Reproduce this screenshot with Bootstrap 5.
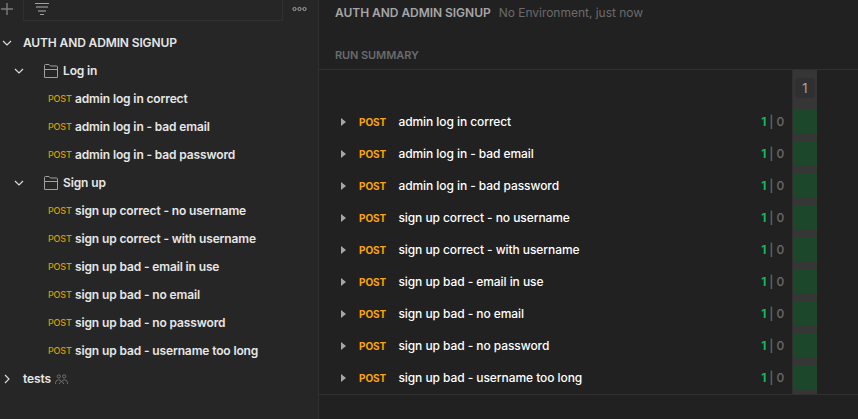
<!DOCTYPE html>
<html lang="en">
<head>
<meta charset="utf-8">
<title>Run summary</title>
<link href="https://cdn.jsdelivr.net/npm/bootstrap@5.3.0/dist/css/bootstrap.min.css" rel="stylesheet">
<style>
body{font-family:Inter,sans-serif;font-size:12px;line-height:16px;background:#212121;color:#fff}
svg{display:block;flex:none}
.side{width:319px;background:#262626;border-right:1px solid #303030;color:#e6e6e6;font-weight:600;letter-spacing:-.13px}
.tools{height:29px}
.plus{width:23px;padding-top:3px}
.filter{width:260px;height:21px;border:1px solid #303030;border-top:0;padding:3px 0 0 11px}
.dots{padding:6px 0 0 9px}
.item{height:28px;white-space:nowrap}
.caret{width:23px;padding-left:2px}
.sub .caret{width:44px;padding-left:14px}
.folder{margin-left:5px}
.req{padding-left:48px}
.req .verb{width:27px;font-size:9px;font-weight:500;color:#d99a08;letter-spacing:-.2px}
.title{height:69px;padding:5px 0 0 16px}
.name{font-weight:600;color:#a6a6a6;letter-spacing:-.04px}
.env{color:#6b6b6b;margin-left:8px;letter-spacing:-.02px}
.label{font-size:11px;font-weight:600;color:#6b6b6b;margin-top:26px;letter-spacing:-.09px}
.grid{height:326px;border-top:1px solid #303030;border-bottom:1px solid #303030}
.results{width:473px;padding-top:36px;font-weight:500;letter-spacing:-.07px}
.line{height:32px;padding-left:22px;white-space:nowrap}
.line .verb{width:39.4px;font-size:10px;font-weight:700;color:#fca510}
.arrow{width:18px}
.score{margin-right:8px;color:#6b6b6b;letter-spacing:-.15px}
.score b{color:#0cbb52;font-weight:700}
.runs{width:25px;background:#363636;border-left:1px solid #303030;padding-top:8px}
.num{width:20px;height:20px;margin:0 2px 12px;border-radius:4px;background:#303030;color:#a6a6a6;font-size:13px;line-height:21px}
.ok{height:24px;margin-bottom:8px;background:#1c472a}
</style>
</head>
<body class="overflow-hidden">
<div class="d-flex vh-100">
<aside class="side flex-shrink-0">
  <div class="tools d-flex">
    <div class="plus"><svg width="14" height="12" viewBox="0 0 14 12"><path d="M1 6h12M7 0v12" stroke="#7c7c7c" stroke-width="1.4" fill="none"/></svg></div>
    <div class="filter"><svg width="14" height="13" viewBox="0 0 14 13"><path d="M0 .5h14M5 11.5h4" stroke="#a0a0a0"/><path d="M1 4h12M3 8h8" stroke="#6c6c6c" stroke-width="2"/></svg></div>
    <div class="dots"><svg width="15" height="6" viewBox="0 0 15 6" fill="none" stroke="#a6a6a6"><circle cx="2.5" cy="3" r="1.6"/><circle cx="7.5" cy="3" r="1.6"/><circle cx="12.5" cy="3" r="1.6"/></svg></div>
  </div>
  <div class="item d-flex align-items-center"><div class="caret"><svg width="10" height="6" viewBox="0 0 10 6"><path d="M1 1l4 4 4-4" fill="none" stroke="#e0e0e0" stroke-width="1.1"/></svg></div><span>AUTH AND ADMIN SIGNUP</span></div>
  <div id="tree"></div>
  <div class="item d-flex align-items-center"><div class="caret"><svg width="10" height="10" viewBox="0 0 10 10"><path d="M3 1l4 4-4 4" fill="none" stroke="#e0e0e0" stroke-width="1.1"/></svg></div><span>tests</span>
  <svg class="ms-1" width="13" height="11" viewBox="0 0 13 11" fill="none" stroke="#777" stroke-width=".9"><circle cx="3.8" cy="2.4" r="1.6"/><circle cx="9.2" cy="2.4" r="1.6"/><path d="M.6 10V8.4Q.8 6 3.6 5.8Q5.6 5.8 6.5 7.6Q7.4 5.8 9.4 5.8Q12.2 6 12.4 8.4V10M4.2 10Q4.4 8.4 6.5 7.4Q8.6 8.4 8.8 10"/></svg></div>
</aside>
<main class="flex-grow-1">
  <div class="title">
    <div class="d-flex"><span class="name">AUTH AND ADMIN SIGNUP</span><span class="env">No Environment, just now</span></div>
    <div class="label">RUN SUMMARY</div>
  </div>
  <div class="grid d-flex">
    <div class="results" id="results"></div>
    <div class="runs" id="runs"><div class="num text-center">1</div></div>
  </div>
</main>
</div>
<script src="https://cdn.jsdelivr.net/npm/bootstrap@5.3.0/dist/js/bootstrap.bundle.min.js"></script>
<script>
const folders=[
 ['Log in',['admin log in correct','admin log in - bad email','admin log in - bad password']],
 ['Sign up',['sign up correct - no username','sign up correct - with username','sign up bad - email in use','sign up bad - no email','sign up bad - no password','sign up bad - username too long']]];
let tree='',rows='',cells='';
for(const [folder,reqs] of folders){
 tree+=`<div class="item sub d-flex align-items-center"><div class="caret"><svg width="10" height="6" viewBox="0 0 10 6"><path d="M1 1l4 4 4-4" fill="none" stroke="#e0e0e0" stroke-width="1.1"/></svg></div><svg width="14" height="14" viewBox="0 0 14 14"><path d="M.5 13.5V1.5Q.5.5 1.5.5H5L6.5 2H12.5Q13.5 2 13.5 3V13.5ZM.5 5.5H13.5" fill="none" stroke="#a0a0a0"/></svg><span class="folder">${folder}</span></div>`;
 for(const r of reqs){
  tree+=`<div class="item req d-flex align-items-center"><span class="verb">POST</span><span>${r}</span></div>`;
  rows+=`<div class="line d-flex align-items-center"><div class="arrow"><svg width="5" height="8" viewBox="0 0 5 8"><path d="M0 0l5 4-5 4z" fill="#a6a6a6"/></svg></div><span class="verb">POST</span><span>${r}</span><span class="score ms-auto"><b>1</b> | 0</span></div>`;
  cells+='<div class="ok"></div>';
 }}
document.getElementById('tree').innerHTML=tree;
document.getElementById('results').innerHTML=rows;
document.getElementById('runs').insertAdjacentHTML('beforeend',cells);
</script>
</body>
</html>
